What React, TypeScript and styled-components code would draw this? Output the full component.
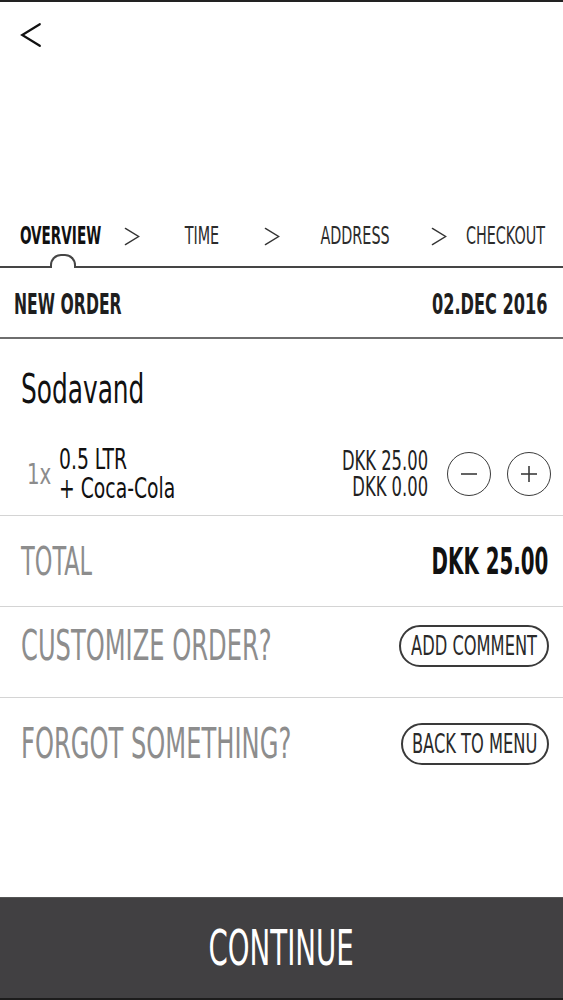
import React from "react";
import styled, { createGlobalStyle, css } from "styled-components";

const GlobalStyle = createGlobalStyle`
  html, body {
    margin: 0;
    padding: 0;
    background: #fff;
  }
  body {
    font-family: "DejaVu Sans Condensed", "Liberation Sans", sans-serif;
    color: #1a1a1a;
  }
  * {
    box-sizing: border-box;
  }
`;

// the reference font is very condensed, so labels get squeezed horizontally
const squeeze = (sx: number, origin = "left") => css`
  display: inline-block;
  white-space: nowrap;
  transform: scaleX(${sx});
  transform-origin: ${origin} center;
`;

function Chevron({ dir, w, h, stroke }: { dir: "left" | "right"; w: number; h: number; stroke: number }) {
  const pad = stroke;
  const pts =
    dir === "left"
      ? `${w - pad},${pad} ${pad},${h / 2} ${w - pad},${h - pad}`
      : `${pad},${pad} ${w - pad},${h / 2} ${pad},${h - pad}`;
  return (
    <svg width={w} height={h} viewBox={`0 0 ${w} ${h}`}>
      <polyline points={pts} fill="none" stroke="currentColor" strokeWidth={stroke} strokeLinecap="round" strokeLinejoin="miter" />
    </svg>
  );
}

const steps = ["OVERVIEW", "TIME", "ADDRESS", "CHECKOUT"];

export default function App() {
  return (
    <>
      <GlobalStyle />
      <Page>
        <TopBar>
          <BackButton aria-label="back">
            <Chevron dir="left" w={22} h={26} stroke={2.2} />
          </BackButton>
        </TopBar>

        <Tabs>
          {steps.map((step, i) => (
            <React.Fragment key={step}>
              <Tab $active={i === 0}>
                <TabLabel $sx={i === 0 ? 0.63 : 0.665}>{step}</TabLabel>
              </Tab>
              {i < steps.length - 1 && (
                <TabArrow>
                  <Chevron dir="right" w={16} h={19} stroke={1.4} />
                </TabArrow>
              )}
            </React.Fragment>
          ))}
        </Tabs>

        <OrderHeader>
          <HeaderText>NEW ORDER</HeaderText>
          <HeaderDate>02.DEC 2016</HeaderDate>
        </OrderHeader>

        <ItemSection>
          <ProductName>Sodavand</ProductName>
          <ItemRow>
            <Qty>1x</Qty>
            <ItemDesc>
              <div>0.5 LTR</div>
              <div>+ Coca-Cola</div>
            </ItemDesc>
            <Spacer />
            <Prices>
              <div>DKK 25.00</div>
              <div>DKK 0.00</div>
            </Prices>
            <CircleButton aria-label="remove">
              <svg width="18" height="18" viewBox="0 0 18 18">
                <line x1="1" y1="9" x2="17" y2="9" stroke="currentColor" strokeWidth="1.6" />
              </svg>
            </CircleButton>
            <CircleButton aria-label="add" $gap>
              <svg width="18" height="18" viewBox="0 0 18 18">
                <line x1="1" y1="9" x2="17" y2="9" stroke="currentColor" strokeWidth="1.6" />
                <line x1="9" y1="1" x2="9" y2="17" stroke="currentColor" strokeWidth="1.6" />
              </svg>
            </CircleButton>
          </ItemRow>
        </ItemSection>

        <TotalRow>
          <TotalLabel>TOTAL</TotalLabel>
          <TotalAmount>DKK 25.00</TotalAmount>
        </TotalRow>

        <ActionRow $lift>
          <ActionLabel>CUSTOMIZE ORDER?</ActionLabel>
          <Pill $w={150}>
            <PillText>ADD COMMENT</PillText>
          </Pill>
        </ActionRow>

        <ActionRow $last>
          <ActionLabel>FORGOT SOMETHING?</ActionLabel>
          <Pill $w={148}>
            <PillText>BACK TO MENU</PillText>
          </Pill>
        </ActionRow>

        <ContinueBar>
          <ContinueText>CONTINUE</ContinueText>
        </ContinueBar>
      </Page>
    </>
  );
}

// page
const Page = styled.div`
  display: flex;
  flex-direction: column;
  min-height: 100vh;
  border-top: 2px solid #222;
`;

const TopBar = styled.header`
  height: 198px;
  padding: 20px 0 0 20px;
`;

const BackButton = styled.button`
  display: flex;
  padding: 0;
  border: none;
  background: none;
  color: #111;
  cursor: pointer;
`;

// step tabs
const Tabs = styled.nav`
  display: grid;
  grid-template-columns: 122px 19px 121px 19px 148px 19px 115px;
  height: 68px;
  padding-top: 6px;
  border-bottom: 2px solid #454545;
`;

const Tab = styled.div<{ $active?: boolean }>`
  position: relative;
  display: flex;
  align-items: center;
  justify-content: center;
  font-size: 24px;
  line-height: 24px;
  font-weight: ${(p) => (p.$active ? 700 : 400)};
  color: ${(p) => (p.$active ? "#111" : "#2c2c2c")};

  ${(p) =>
    p.$active &&
    css`
      &::after {
        content: "";
        position: absolute;
        left: 50%;
        bottom: -2px;
        width: 22px;
        height: 12px;
        margin-left: -11px;
        border: 2px solid #454545;
        border-bottom: none;
        border-radius: 11px 11px 0 0;
        background: #fff;
      }
    `}
`;

const TabLabel = styled.span<{ $sx: number }>`
  ${(p) => squeeze(p.$sx, "center")}
`;

const TabArrow = styled.div`
  display: flex;
  align-items: center;
  justify-content: center;
  color: #333;
`;

// order header
const OrderHeader = styled.div`
  display: flex;
  align-items: center;
  justify-content: space-between;
  height: 71px;
  padding: 4px 15px 0 14px;
  border-bottom: 2px solid #6e6e6e;
  font-size: 29px;
  line-height: 29px;
  font-weight: 700;
  color: #1e1e1e;
`;

const HeaderText = styled.span`
  ${squeeze(0.6)}
`;

const HeaderDate = styled.span`
  ${squeeze(0.62, "right")}
`;

// item
const ItemSection = styled.section`
  padding: 30px 12px 12px 0;
  border-bottom: 1px solid #d4d4d4;
`;

const ProductName = styled.h2`
  margin: 0 0 36px 21px;
  font-size: 40px;
  line-height: 40px;
  font-weight: 400;
  color: #111;

  ${squeeze(0.69)}
`;

const ItemRow = styled.div`
  display: flex;
  align-items: center;
`;

const Qty = styled.span`
  flex-shrink: 0;
  width: 32px;
  margin-left: 27px;
  font-size: 29px;
  color: #8c8c8c;

  ${squeeze(0.76)}
`;

const ItemDesc = styled.div`
  flex-shrink: 0;
  font-size: 29px;
  line-height: 29px;
  color: #111;

  ${squeeze(0.72)}
`;

const Spacer = styled.div`
  flex: 1;
`;

const Prices = styled.div`
  flex-shrink: 0;
  margin-right: 19px;
  font-size: 26px;
  line-height: 26px;
  text-align: right;
  color: #222;

  ${squeeze(0.7, "right")}
`;

const CircleButton = styled.button<{ $gap?: boolean }>`
  display: flex;
  flex-shrink: 0;
  align-items: center;
  justify-content: center;
  width: 44px;
  height: 44px;
  margin-left: ${(p) => (p.$gap ? "16px" : "0")};
  padding: 0;
  border: 1.6px solid #3c3c3c;
  border-radius: 50%;
  background: #fff;
  color: #3c3c3c;
`;

// total
const TotalRow = styled.div`
  display: flex;
  align-items: center;
  justify-content: space-between;
  height: 91px;
  padding: 0 15px 0 21px;
  border-bottom: 1px solid #d4d4d4;
`;

const TotalLabel = styled.span`
  font-size: 39px;
  color: #8d8d8d;

  ${squeeze(0.64)}
`;

const TotalAmount = styled.span`
  font-size: 38px;
  font-weight: 700;
  color: #111;

  ${squeeze(0.58, "right")}
`;

// extra actions
const ActionRow = styled.div<{ $lift?: boolean; $last?: boolean }>`
  display: flex;
  align-items: center;
  justify-content: space-between;
  height: 91px;
  padding: 0 14px ${(p) => (p.$lift ? "13px" : "0")} 21px;
  border-bottom: ${(p) => (p.$last ? "none" : "1px solid #d4d4d4")};
`;

const ActionLabel = styled.span`
  flex: 0 1 auto;
  min-width: 0;
  font-size: 42px;
  color: #8d8d8d;

  ${squeeze(0.64)}
`;

const Pill = styled.button<{ $w: number }>`
  display: flex;
  flex-shrink: 0;
  align-items: center;
  justify-content: center;
  width: ${(p) => p.$w}px;
  height: 42px;
  padding: 0;
  border: 2px solid #3a3a3a;
  border-radius: 21px;
  background: #fff;
  font-family: inherit;
  font-size: 27px;
  color: #2a2a2a;
  overflow: visible;
`;

const PillText = styled.span`
  ${squeeze(0.67, "center")}
`;

// bottom bar
const ContinueBar = styled.button`
  display: flex;
  align-items: center;
  justify-content: center;
  width: 100%;
  height: 103px;
  margin-top: auto;
  padding: 0;
  border: none;
  border-top: 1px solid #555;
  border-bottom: 2px solid #1c1c1c;
  background: #414042;
  font-family: inherit;
  font-size: 50px;
  color: #fff;
`;

const ContinueText = styled.span`
  ${squeeze(0.615, "center")}
`;
